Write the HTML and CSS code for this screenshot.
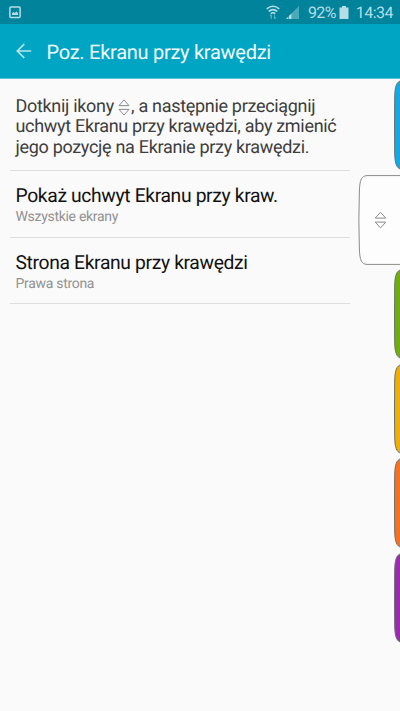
FILE: index.html
```html
<!DOCTYPE html>
<html lang="pl">
<head>
<meta charset="utf-8">
<title>Poz. Ekranu przy krawędzi</title>
<link rel="stylesheet" href="styles.css">
</head>
<body>
<div class="status">
  <svg class="shot" width="12" height="13" viewBox="0 0 12 13"><rect x=".9" y=".9" width="10.2" height="10.6" rx="1" fill="none" stroke="currentColor" stroke-width="1.5"/><path d="M3 9V7.2L4.6 6l1.2 1 1.8-1.5L9 7.2V9z" fill="currentColor"/></svg>
  <div class="status-right">
    <svg class="wifi" width="14" height="15" viewBox="0 0 14 15" fill="none" stroke="currentColor" stroke-width="1.6"><path d="M.7 3.8Q7-1.2 13.3 3.8M2.7 6.3Q7 2.8 11.3 6.3M4.7 8.6Q7 6.8 9.3 8.6"/><path d="M5.3 14V9.8M3.9 11l1.4-1.4M8.5 9.5v4.2M9.9 12.4l-1.4 1.4" opacity=".5" stroke-width="1.2"/></svg>
    <svg class="signal" width="14" height="13" viewBox="0 0 14 13" fill="currentColor"><path d="M0 13L13 0v13z" opacity=".42"/><path d="M0 13l2-2v2zM3 13v-3l2.4-2.4V13z"/></svg>
    <span class="percent">92%</span>
    <svg class="battery" width="10" height="13" viewBox="0 0 10 13" fill="currentColor"><path d="M3 0h4v1.5h2.5V13H.5V1.5H3z"/></svg>
    <span class="clock">14:34</span>
  </div>
</div>
<header class="bar">
  <svg class="back" width="16" height="16" viewBox="0 0 16 16" fill="none" stroke="currentColor" stroke-width="1.7"><path d="M15.2 8H1.5M8.3 1L1.3 8l7 7"/></svg>
  <h1>Poz. Ekranu przy krawędzi</h1>
</header>
<main class="content">
  <p class="hint">Dotknij ikony <svg class="arrows" width="12" height="17" viewBox="0 0 12 17"><path d="M6 .9L11 6.6H1zM6 16.1L11 10.4H1z"/></svg>, a następnie przeciągnij<br>uchwyt Ekranu przy krawędzi, aby zmienić<br>jego pozycję na Ekranie przy krawędzi.</p>
  <section class="item">
    <h2>Pokaż uchwyt Ekranu przy kraw.</h2>
    <p>Wszystkie ekrany</p>
  </section>
  <section class="item">
    <h2>Strona Ekranu przy krawędzi</h2>
    <p>Prawa strona</p>
  </section>
</main>
<aside class="edge">
  <svg class="tab blue" viewBox="0 0 6 90"><path d="M7 .7C2.7 2 .9 6 .7 17Q.3 45 .7 73C.9 84 2.7 88 7 89.3"/></svg>
  <svg class="tab handle" viewBox="0 0 42 90"><path d="M43 .6H9C3.5 .8 1.7 5 1.4 16Q.3 45 1.4 74C1.7 85 3.5 89.2 9 89.4H43"/><path class="arrow" d="M22.5 37.3L27.8 43.1H17.2zM22.5 52.9L27.8 47.1H17.2z"/></svg>
  <svg class="tab green" viewBox="0 0 6 90"><path d="M7 .7C2.7 2 .9 6 .7 17Q.3 45 .7 73C.9 84 2.7 88 7 89.3"/></svg>
  <svg class="tab yellow" viewBox="0 0 6 90"><path d="M7 .7C2.7 2 .9 6 .7 17Q.3 45 .7 73C.9 84 2.7 88 7 89.3"/></svg>
  <svg class="tab orange" viewBox="0 0 6 90"><path d="M7 .7C2.7 2 .9 6 .7 17Q.3 45 .7 73C.9 84 2.7 88 7 89.3"/></svg>
  <svg class="tab purple" viewBox="0 0 6 90"><path d="M7 .7C2.7 2 .9 6 .7 17Q.3 45 .7 73C.9 84 2.7 88 7 89.3"/></svg>
</aside>
</body>
</html>
```
FILE: styles.css
```css
* { box-sizing: border-box; }
body { margin: 0; height: 711px; overflow: hidden; position: relative; background: #fafafa; font-family: Roboto, "Noto Sans", sans-serif; text-rendering: geometricPrecision; }
h1, h2, p { margin: 0; font-weight: 400; white-space: nowrap; }
svg { display: block; flex: none; }
.status { height: 24px; padding: 0 7px 0 9px; display: flex; align-items: center; justify-content: space-between; background: #00839b; color: #b5dde5; font-size: 16px; line-height: 24px; }
.status-right { display: flex; align-items: center; }
.signal { margin-left: 6px; }
.percent { margin-left: 8px; padding-top: 2px; letter-spacing: -.7px; }
.battery { margin-left: 3px; }
.clock { margin-left: 7px; padding-top: 2px; letter-spacing: -.5px; }
.bar { height: 55px; padding-left: 16px; display: flex; align-items: center; background: #00a5c4; border-bottom: 1px solid #58bfd2; color: #f0fafc; }
.back { color: #b9e5ee; }
h1 { margin-left: 14.5px; font-size: 20px; line-height: 24px; padding-top: 1px; letter-spacing: -.27px; }
.content { width: 340px; margin-left: 10px; }
.hint { height: 92px; padding: 18px 0 0 5.5px; font-size: 18px; line-height: 20.3px; letter-spacing: -.31px; color: #3d3d3d; border-bottom: 1px solid #dedede; }
.arrows { display: inline-block; vertical-align: -4px; margin-right: 1px; }
.arrows path, .arrow { fill: none; stroke: #8c8c8c; stroke-width: 1; stroke-linejoin: round; }
.item { height: 66.5px; padding: 13px 0 0 5.5px; border-bottom: 1px solid #dedede; }
h2 { font-size: 19.3px; line-height: 24px; letter-spacing: -.35px; color: #111; }
.item p { font-size: 14px; line-height: 18px; letter-spacing: -.3px; color: #929292; }
.edge { position: absolute; right: 0; top: 80px; display: flex; flex-direction: column; align-items: flex-end; gap: 4.5px; }
.tab { width: 6px; height: 90px; stroke: #69706b; stroke-width: 1; }
.handle { width: 42px; fill: #fdfdfd; stroke: #8b8b8b; }
.blue { fill: #12a9e5; }
.green { fill: #70ae10; }
.yellow { fill: #edaf09; }
.orange { fill: #f57224; }
.purple { fill: #9b2bae; }
```
